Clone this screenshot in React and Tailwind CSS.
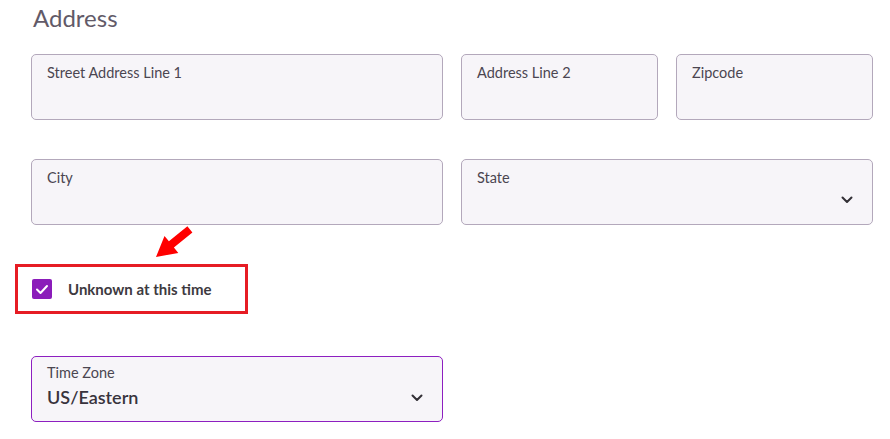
import React from "react";

const Chevron = () => (
  <svg width="12" height="8" viewBox="0 0 12 8" className="absolute">
    <path d="M1.5 1.5 L6 6 L10.5 1.5" fill="none" stroke="#333036" strokeWidth="2" strokeLinecap="round" strokeLinejoin="round" />
  </svg>
);

const Field = ({ label, width, select }) => (
  <div
    className={`relative h-[66px] rounded-[5px] border border-[#b3a8bb] bg-[#f7f5f9] px-[15px] pt-[5px] ${width}`}
  >
    <span className="text-[14.5px] leading-[20px] text-[#4b4651]">{label}</span>
    {select && (
      <div className="absolute right-[31px] top-[36px]">
        <Chevron />
      </div>
    )}
  </div>
);

const App = () => {
  return (
    <div className="relative h-[439px] w-[890px] overflow-hidden bg-white font-['Lato','Liberation_Sans',sans-serif]">
      <div className="flex w-[873px] flex-col pl-[31px]">
        <h2 className="ml-[2px] mt-[3px] text-[24px] leading-[30px] text-[#625a68]">Address</h2>

        <div className="mt-[21px] flex gap-[18px]">
          <Field label="Street Address Line 1" width="w-[412px]" />
          <Field label="Address Line 2" width="w-[197px]" />
          <Field label="Zipcode" width="w-[197px]" />
        </div>

        <div className="mt-[39px] flex gap-[18px]">
          <Field label="City" width="w-[412px]" />
          <Field label="State" width="w-[412px]" select />
        </div>

        <div className="-ml-[16px] mt-[39px] flex h-[50px] w-[233px] items-center border-[3px] border-[#e61c24] pl-[14px]">
          <div className="flex h-[20px] w-[20px] items-center justify-center rounded-[2px] bg-[#8b1cba]">
            <svg width="14" height="11" viewBox="0 0 14 11">
              <path d="M2 5.5 L5.5 9 L12 2" fill="none" stroke="white" strokeWidth="2" strokeLinecap="round" strokeLinejoin="round" />
            </svg>
          </div>
          <span className="ml-[16px] text-[15px] font-bold text-[#3d3a40]">Unknown at this time</span>
        </div>

        <div className="relative mt-[42px] h-[66px] w-[412px] rounded-[5px] border border-[#8d1fc0] bg-[#f7f5f9] px-[15px] pt-[7px]">
          <div className="text-[14.5px] leading-[18px] text-[#4b4651]">Time Zone</div>
          <div className="mt-[3px] text-[18px] font-semibold leading-[24px] text-[#38333d]">US/Eastern</div>
          <div className="absolute right-[31px] top-[37px]">
            <Chevron />
          </div>
        </div>
      </div>

      <svg className="absolute left-0 top-0" width="890" height="439" viewBox="0 0 890 439">
        <polygon
          points="156,257 164.5,235.9 168.9,241.3 187.4,226.2 192.4,232.4 173.9,247.5 178.3,252.9"
          fill="#ff0000"
        />
      </svg>
    </div>
  );
};

export default App;
